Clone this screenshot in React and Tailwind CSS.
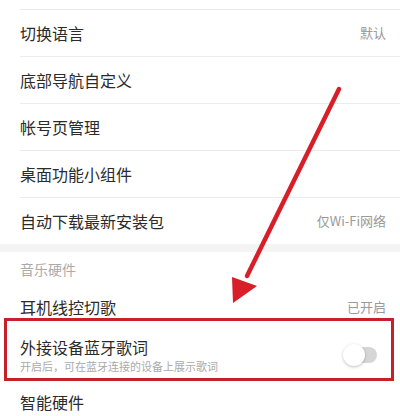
import React from 'react';

const FONT = { fontFamily: '"Noto Sans CJK SC", "Noto Sans", sans-serif' };

const Row = ({ title, value, last }) => (
  <div>
    <div className="h-[46px] flex items-center justify-between pl-5 pr-[14px]">
      <span className="text-[16px] text-[#2b2b2b]">{title}</span>
      {value && <span className="text-[13px] text-[#9a9a9a]">{value}</span>}
    </div>
    {!last && <div className="ml-5 h-px bg-[#ececec]" />}
  </div>
);

const App = () => {
  return (
    <div className="relative w-[400px] h-[416px] overflow-hidden bg-white" style={FONT}>
      <div className="h-[9px]" />
      <div className="ml-5 h-px bg-[#ececec]" />

      {/* Settings list */}
      <Row title="切换语言" value="默认" />
      <Row title="底部导航自定义" />
      <Row title="帐号页管理" />
      <Row title="桌面功能小组件" />
      <Row title="自动下载最新安装包" value="仅Wi-Fi网络" last />

      <div className="h-[8px] bg-[#f4f4f4]" />

      {/* Music hardware section */}
      <div className="h-[34px] flex items-center pl-5">
        <span className="text-[14px] text-[#aaaaaa]">音乐硬件</span>
      </div>
      <div className="h-[42px] flex items-center justify-between pl-5 pr-[14px]">
        <span className="text-[16px] text-[#2b2b2b]">耳机线控切歌</span>
        <span className="text-[13px] text-[#9a9a9a]">已开启</span>
      </div>
      <div className="h-[54px] flex items-center justify-between pl-5 pr-[23px]">
        <div className="flex flex-col">
          <span className="text-[16px] leading-[22px] text-[#2b2b2b]">外接设备蓝牙歌词</span>
          <span className="text-[11px] leading-[16px] text-[#aaaaaa]">开启后，可在蓝牙连接的设备上展示歌词</span>
        </div>
        <div className="relative w-[32px] h-[16px] rounded-full bg-[#d6d6d6]">
          <div className="absolute left-[-2px] top-[-3px] w-[22px] h-[22px] rounded-full bg-white shadow-[0_1px_3px_rgba(0,0,0,0.25)]" />
        </div>
      </div>
      <div className="h-[40px] flex items-center pl-5">
        <span className="text-[16px] text-[#2b2b2b]">智能硬件</span>
      </div>

      {/* Annotation overlay */}
      <div className="absolute left-[4px] top-[318px] w-[390px] h-[63px] border-[3px] border-[#c8202b]" />
      <svg className="absolute left-0 top-0" width="400" height="416" viewBox="0 0 400 416">
        <line x1="339" y1="89" x2="247" y2="276" stroke="#d81e28" strokeWidth="4.5" strokeLinecap="round" />
        <polygon points="233,303 232,277 257,286" fill="#d81e28" />
      </svg>
    </div>
  );
};

export default App;
